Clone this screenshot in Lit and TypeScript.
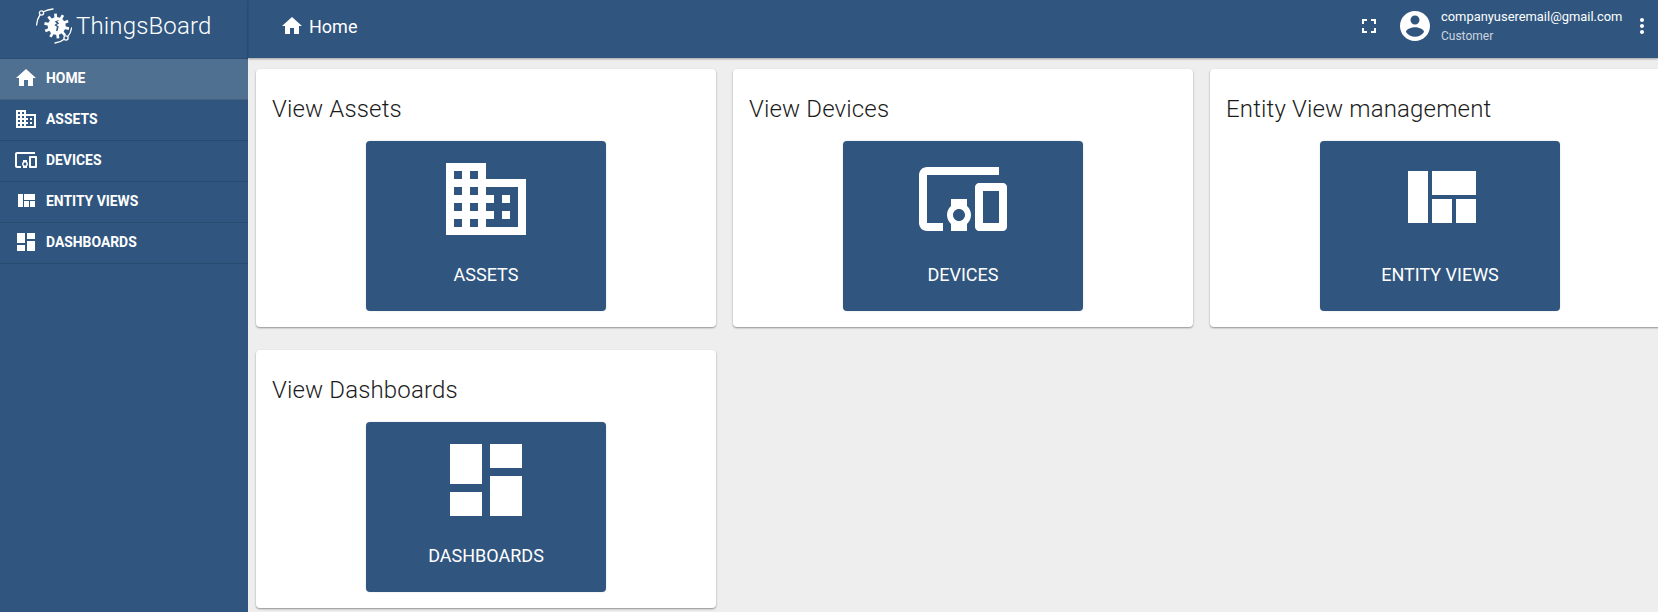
import { LitElement, html, css, svg } from "lit";
import { customElement } from "lit/decorators.js";

const P: Record<string, string> = {
  home: "M10 20v-6h4v6h5v-8h3L12 3 2 12h3v8z",
  domain: "M12 7V3H2v18h20V7H12zM6 19H4v-2h2v2zm0-4H4v-2h2v2zm0-4H4V9h2v2zm0-4H4V5h2v2zm4 12H8v-2h2v2zm0-4H8v-2h2v2zm0-4H8V9h2v2zm0-4H8V5h2v2zm10 12h-8v-2h2v-2h-2v-2h2v-2h-2V9h8v10zm-2-8h-2v2h2v-2zm0 4h-2v2h2v-2z",
  devices: "M3 6h18V4H3c-1.1 0-2 .9-2 2v12c0 1.1.9 2 2 2h4v-2H3V6zm10 6H9v1.78c-.61.55-1 1.33-1 2.22s.39 1.67 1 2.22V20h4v-1.78c.61-.55 1-1.34 1-2.22s-.39-1.67-1-2.22V12zm-2 5.5c-.83 0-1.5-.67-1.5-1.5s.67-1.5 1.5-1.5 1.5.67 1.5 1.5-.67 1.5-1.5 1.5zM22 8h-6c-.5 0-1 .5-1 1v10c0 .5.5 1 1 1h6c.5 0 1-.5 1-1V9c0-.5-.5-1-1-1zm-1 10h-4v-8h4v8z",
  quilt: "M10 18h5v-6h-5v6zm-6 0h5V5H4v13zm12 0h5v-6h-5v6zM10 5v6h11V5H10z",
  dashboard: "M3 13h8V3H3v10zm0 8h8v-6H3v6zm10 0h8V11h-8v10zm0-18v6h8V3h-8z",
  fullscreen: "M7 14H5v5h5v-2H7v-3zm-2-4h2V7h3V5H5v5zm12 7h-3v2h5v-5h-2v3zM14 5v2h3v3h2V5h-5z",
  account: "M12 2C6.48 2 2 6.48 2 12s4.48 10 10 10 10-4.48 10-10S17.52 2 12 2zm0 3c1.66 0 3 1.34 3 3s-1.34 3-3 3-3-1.34-3-3 1.34-3 3-3zm0 14.2c-2.5 0-4.71-1.28-6-3.22.03-1.99 4-3.08 6-3.08 1.99 0 5.97 1.09 6 3.08-1.29 1.94-3.5 3.22-6 3.22z",
  more: "M12 8c1.1 0 2-.9 2-2s-.9-2-2-2-2 .9-2 2 .9 2 2 2zm0 2c-1.1 0-2 .9-2 2s.9 2 2 2 2-.9 2-2-.9-2-2-2zm0 6c-1.1 0-2 .9-2 2s.9 2 2 2 2-.9 2-2-.9-2-2-2z",
};

const icon = (name: string, cls = "ic") =>
  html`<svg class=${cls} viewBox="0 0 24 24" fill="currentColor" aria-hidden="true"><path d=${P[name]}></path></svg>`;

const teeth = Array.from({ length: 10 }, (_, i) => {
  const a = (i * 36 + 12) * (Math.PI / 180);
  const x1 = 20.7 + Math.cos(a) * 8, y1 = 18 + Math.sin(a) * 8;
  const x2 = 20.7 + Math.cos(a) * 12.5, y2 = 18 + Math.sin(a) * 12.5;
  return svg`<line x1=${x1} y1=${y1} x2=${x2} y2=${y2} stroke="#fff" stroke-width="2.7"></line>`;
});

const logo = html`<svg class="logo" viewBox="0 0 36 36" aria-hidden="true">
  <circle cx="20.7" cy="18" r="9" fill="#fff"></circle>
  ${teeth}
  <path d="M22.7 12l-4 1.4 2.2 2.2-2.7 1.4 2.7 1.8-.9 4 1.4.4 1.3-4.8-2.2-1.4 2.7-1.4-2-2 1.3-.8z" fill="#305680"></path>
  <g fill="none" stroke="#fff" stroke-width="1.3" stroke-linecap="round">
    <circle cx="5.5" cy="5" r="2.1"></circle>
    <path d="M7.4 3.8C10 2.4 13 1.4 17 1"></path>
    <path d="M3.9 7C2.2 9.4 1 12.5.6 17"></path>
    <circle cx="30" cy="30" r="2.1"></circle>
    <path d="M28.1 31.2C25.6 33.4 22.8 34.6 19 35"></path>
    <path d="M31.9 28.4C33.8 26.4 35 23.6 35.5 20"></path>
  </g>
</svg>`;

const nav = [
  ["home", "Home", true],
  ["domain", "Assets", false],
  ["devices", "Devices", false],
  ["quilt", "Entity Views", false],
  ["dashboard", "Dashboards", false],
] as const;

const cards = [
  ["View Assets", "domain", "Assets"],
  ["View Devices", "devices", "Devices"],
  ["Entity View management", "quilt", "Entity Views"],
  ["View Dashboards", "dashboard", "Dashboards"],
] as const;

@customElement("app-root")
export class AppRoot extends LitElement {
  static styles = css`
    :host {
      display: grid;
      grid-template-columns: 248px 1fr;
      width: 100%;
      height: 612px;
      overflow: hidden;
      font-family: Roboto, "Noto Sans", sans-serif;
      background: #eee;
      color: #fff;
    }
    .side {
      background: #305680;
      display: flex;
      flex-direction: column;
      min-height: 0;
    }
    .brand {
      height: 58px;
      box-sizing: content-box;
      border-bottom: 1px solid rgba(0, 0, 0, 0.1);
      display: flex;
      align-items: center;
      padding-left: 36px;
      gap: 4px;
    }
    .logo {
      width: 36px;
      height: 36px;
      flex: none;
      margin-top: -6px;
    }
    .brand-name {
      font-size: 24px;
      font-weight: 300;
      line-height: 50px;
      margin-bottom: 7px;
      letter-spacing: 0.15px;
    }
    .nav-item {
      height: 40px;
      box-sizing: content-box;
      border-bottom: 1px solid rgba(0, 0, 0, 0.12);
      display: flex;
      align-items: center;
      padding-left: 14px;
      gap: 8px;
      font-size: 13.9px;
      font-weight: 700;
      text-transform: uppercase;
    }
    .nav-item > * {
      margin-bottom: 2px;
    }
    .nav-item.on {
      background: #507091;
    }
    .ic {
      width: 24px;
      height: 24px;
      flex: none;
      display: block;
    }
    .main {
      display: flex;
      flex-direction: column;
      min-width: 0;
      min-height: 0;
    }
    .bar {
      height: 58px;
      flex: none;
      background: #305680;
      box-sizing: border-box;
      border-left: 1px solid rgba(0, 0, 0, 0.08);
      box-shadow: 0 1px 2px rgba(0, 0, 0, 0.35);
      display: flex;
      align-items: center;
      padding-left: 31px;
      padding-bottom: 6px;
      position: relative;
    }
    .crumb {
      display: flex;
      align-items: center;
      gap: 5px;
      font-size: 18px;
      font-weight: 400;
    }
    .tools {
      margin-left: auto;
      display: flex;
      align-items: center;
      padding-right: 4px;
    }
    .full {
      margin-right: -5px;
    }
    .avatar {
      width: 36px;
      height: 36px;
      display: block;
      margin-left: 21px;
    }
    .user {
      margin-left: 8px;
      width: 181px;
      display: flex;
      flex-direction: column;
      gap: 3px;
    }
    .mail {
      font-size: 12.9px;
      line-height: 16px;
      white-space: nowrap;
    }
    .role {
      font-size: 12px;
      line-height: 16px;
      color: rgba(255, 255, 255, 0.75);
    }
    .more {
      margin-left: 8px;
    }
    .content {
      flex: 1;
      min-height: 0;
      overflow: hidden;
      padding: 11px 0 0 8px;
      display: grid;
      grid-template-columns: repeat(3, 460px);
      grid-auto-rows: 258px;
      column-gap: 17px;
      row-gap: 23px;
      align-content: start;
    }
    .card {
      background: #fff;
      border-radius: 4px;
      box-shadow: 0 1px 2px rgba(0, 0, 0, 0.4);
      display: flex;
      flex-direction: column;
      align-items: center;
      padding-top: 24px;
      box-sizing: border-box;
    }
    .title {
      align-self: stretch;
      margin: 0 0 16px;
      padding-left: 16px;
      font-size: 24px;
      font-weight: 300;
      line-height: 32px;
      letter-spacing: 0.15px;
      color: #1c1c1c;
    }
    .tile {
      width: 240px;
      height: 170px;
      background: #305680;
      border-radius: 4px;
      box-shadow: 0 0 2px rgba(0, 0, 0, 0.15);
      display: flex;
      flex-direction: column;
      align-items: center;
      padding-top: 10px;
      box-sizing: border-box;
    }
    .big {
      width: 96px;
      height: 96px;
      display: block;
      flex: none;
    }
    .label {
      margin-top: 18px;
      font-size: 18px;
      font-weight: 400;
      line-height: 20px;
      text-transform: uppercase;
    }
  `;

  render() {
    return html`
      <aside class="side">
        <div class="brand">${logo}<span class="brand-name">ThingsBoard</span></div>
        ${nav.map(
          ([ic, label, on]) => html`<div class="nav-item ${on ? "on" : ""}">${icon(ic)}<span>${label}</span></div>`
        )}
      </aside>
      <div class="main">
        <header class="bar">
          <div class="crumb">${icon("home")}<span>Home</span></div>
          <div class="tools">
            ${icon("fullscreen", "ic full")}
            ${icon("account", "avatar")}
            <div class="user">
              <span class="mail">companyuseremail@gmail.com</span>
              <span class="role">Customer</span>
            </div>
            ${icon("more", "ic more")}
          </div>
        </header>
        <section class="content">
          ${cards.map(
            ([t, ic, l]) => html`<article class="card">
              <h2 class="title">${t}</h2>
              <div class="tile">${icon(ic, "big")}<span class="label">${l}</span></div>
            </article>`
          )}
        </section>
      </div>
    `;
  }
}
